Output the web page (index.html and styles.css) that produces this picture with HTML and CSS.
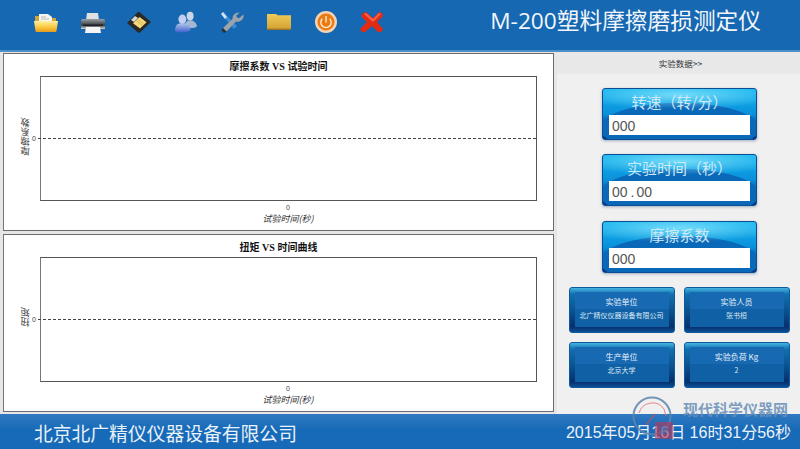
FILE: index.html
```html
<!DOCTYPE html>
<html lang="zh">
<head>
<meta charset="utf-8">
<title>M-200塑料摩擦磨损测定仪</title>
<link rel="stylesheet" href="styles.css">
</head>
<body>
<div class="app">
  <header class="top">
    <nav class="tools">
      <svg class="ico" viewBox="0 0 24 22">
        <defs><linearGradient id="gy" x1="0" y1="0" x2="0" y2="1"><stop offset="0" stop-color="#fff1a6"/><stop offset=".55" stop-color="#fbc93f"/><stop offset="1" stop-color="#e39a1c"/></linearGradient></defs>
        <path d="M1 5h7l1.500 2H22v6H1z" fill="#d5a33a"/><path d="M5 3h9l4 3v6H5z" fill="#f5f5f0"/><path d="M7 6h5M7 8h8" stroke="#a8a8a0" stroke-width=".7"/><path d="M0 10h24l-1.500 10q0 1-1 1h-19q-1 0-1-1z" fill="url(#gy)"/>
      </svg>
      <svg class="ico" viewBox="0 0 24 22">
        <defs><linearGradient id="gp" x1="0" y1="0" x2="0" y2="1"><stop offset="0" stop-color="#9aa0a5"/><stop offset=".6" stop-color="#3a3f44"/><stop offset="1" stop-color="#d4d6d8"/></linearGradient></defs>
        <path d="M6 2h11l1 7H5z" fill="#e0e1e2"/><path d="M1.500 8h21q1.500 0 1.500 2v8H0v-8q0-2 1.500-2z" fill="url(#gp)"/><path d="M2 13.500h20v1.500H2z" fill="#1f2326"/><path d="M5 16h14l1 6H4z" fill="#f4f4f4"/>
      </svg>
      <svg class="ico" viewBox="0 0 24 22">
        <path d="M11 1l1.500 0L24 11 13 21.500q-1 .5-2 0L0 12z" fill="#2a2925"/><path d="M12.500 6l7 5.200-6.500 6.300-7-5.300z" fill="#f6d97c"/><path d="M9 9.500l6 4.500M10.500 8.200l6 4.500" stroke="#c49c3a" stroke-width=".6"/><path d="M4 9l4-4 3 2-4 4z" fill="#d8d8d8"/>
      </svg>
      <svg class="ico" viewBox="0 0 24 24">
        <defs><linearGradient id="gu" x1="0" y1="0" x2="0" y2="1"><stop offset="0" stop-color="#b7c8ee"/><stop offset="1" stop-color="#3d5fcc"/></linearGradient></defs>
        <ellipse cx="16.500" cy="5.500" rx="3.800" ry="4.800" fill="#c9d6e6"/><path d="M11 16q0-6 5.500-6t7.500 6q0 2-5 2.500-8 0-8-2.500z" fill="#a5b6d3"/><ellipse cx="8" cy="9" rx="4.300" ry="5.200" fill="#c2cff3"/><path d="M0 21q0-8 8-8t9 7q0 3-9 3.500-8 0-8-2.500z" fill="url(#gu)"/>
      </svg>
      <svg class="ico" viewBox="0 0 24 22">
        <path d="M1 3l2.500-2L17 15l-3 3z" fill="#3f8ad0"/><path d="M3 1L7 6 5 8 1 3z" fill="#cfe4f6"/><path d="M23.500 3.500a6 6 0 0 1-7.500 7L7 20l-3.500.5-.5-3.500 9.500-9a6 6 0 0 1 7-6.500L16 5l2.500 2.500z" fill="#9ca3a9"/><path d="M3 17l3.500 3.500L4 22 1.500 19.500z" fill="#2b2e31"/>
      </svg>
      <svg class="ico" viewBox="0 0 24 22">
        <defs><linearGradient id="gf" x1="0" y1="0" x2="0" y2="1"><stop offset="0" stop-color="#efcb5a"/><stop offset=".85" stop-color="#d8a635"/><stop offset="1" stop-color="#8f6a1d"/></linearGradient></defs>
        <path d="M0 3h9l1.500 1.200H24V19H0z" fill="url(#gf)"/>
      </svg>
      <svg class="ico" viewBox="0 0 24 22">
        <circle cx="12" cy="11" r="11" fill="#f4d2b4"/><circle cx="12" cy="11" r="8.500" fill="#ec7a12"/><path d="M8.200 7.800a5.200 5.200 0 1 0 7.600 0" fill="none" stroke="#fff3e0" stroke-width="1.300"/><path d="M12 5v6.500" stroke="#fff3e0" stroke-width="1.300"/>
      </svg>
      <svg class="ico" viewBox="0 0 24 22">
        <path d="M3 2l3-1 7 6 6-6 3 1 1 3-6 6 6 7-2 3-3 0-6-6-7 6-3 0-2-3 7-7-6-6z" fill="#e42a10"/><path d="M4 3l2-1 7 6 6-6 2 1-8 8z" fill="#f4634a"/>
      </svg>
    </nav>
    <h1 class="app-title">M-200塑料摩擦磨损测定仪</h1>
  </header>

  <main class="body">
    <section class="charts">
      <article class="chart">
        <h2 class="chart-title">摩擦系数 VS 试验时间</h2>
        <div class="plot-row">
          <div class="y-name">摩擦系数</div>
          <div class="y-tick">0</div>
          <div class="plot"><div class="grid-line"></div></div>
        </div>
        <div class="x-tick">0</div>
        <div class="x-name">试验时间(秒)</div>
      </article>
      <article class="chart">
        <h2 class="chart-title">扭矩 VS 时间曲线</h2>
        <div class="plot-row">
          <div class="y-name">扭矩</div>
          <div class="y-tick">0</div>
          <div class="plot"><div class="grid-line"></div></div>
        </div>
        <div class="x-tick">0</div>
        <div class="x-name">试验时间(秒)</div>
      </article>
    </section>

    <aside class="side">
      <div class="side-head">实验数据&gt;&gt;</div>
      <div class="gauges">
        <div class="gauge"><div class="gauge-label">转速（转/分）</div><div class="gauge-value">000</div></div>
        <div class="gauge"><div class="gauge-label">实验时间（秒）</div><div class="gauge-value">00<span class="dot">.</span>00</div></div>
        <div class="gauge"><div class="gauge-label">摩擦系数</div><div class="gauge-value">000</div></div>
      </div>
      <div class="cards">
        <div class="card"><div class="card-label">实验单位</div><div class="card-value">北广精仪仪器设备有限公司</div></div>
        <div class="card"><div class="card-label">实验人员</div><div class="card-value">张书桓</div></div>
        <div class="card"><div class="card-label">生产单位</div><div class="card-value">北京大学</div></div>
        <div class="card"><div class="card-label">实验负荷 Kg</div><div class="card-value">2</div></div>
      </div>
    </aside>
  </main>

  <footer class="bottom">
    <div class="company">北京北广精仪仪器设备有限公司</div>
    <div class="clock">2015年05月16日 16时31分56秒</div>
  </footer>

  <div class="mark">
    <svg class="mark-ico" viewBox="0 0 44 46"><circle cx="22" cy="20" r="18.500" fill="none" stroke="#5f86ad" stroke-width="2"/><path d="M9 17a14 14 0 0 1 25-4l2 7" fill="none" stroke="#e2707f" stroke-width="1"/><path d="M16 29l9-11" stroke="#a8566f" stroke-width="1.500"/><rect x="25" y="26" width="18" height="17" fill="#b83a5c" fill-opacity=".75"/><rect x="31" y="30" width="6" height="8" fill="#2f74b8" fill-opacity=".6"/></svg>
    <div class="mark-text">现代科学仪器网</div>
  </div>
</div>
</body>
</html>
```

FILE: styles.css
```css
* { box-sizing: border-box; }
html, body { margin: 0; height: 100%; }
body { font-family: "Noto Sans CJK SC", "Liberation Sans", sans-serif; overflow: hidden; }

.app { position: relative; width: 800px; height: 449px; display: flex; flex-direction: column; background: #e6e6e6; }

.top { height: 52px; flex: none; display: flex; align-items: center; justify-content: space-between; padding: 0 39px 7px 34px; background: #1668b2; border-bottom: 2px solid #4f8fc8; }
.tools { display: flex; align-items: center; gap: 22.600px; }
.ico { width: 24px; height: 22px; display: block; }
.app-title { margin: 0; font-family: "Open Sans", "Noto Sans CJK SC", sans-serif; font-size: 22.700px; font-weight: 400; color: #f2f6fb; white-space: nowrap; line-height: 1; }

.body { flex: 1; display: flex; min-height: 0; }

.charts { width: 557px; flex: none; padding: 1px 0 0 3px; display: flex; flex-direction: column; gap: 3px; }
.chart { width: 551px; height: 178px; background: #fff; border: 1px solid #6b6b6b; border-left-color: #777; display: flex; flex-direction: column; }
.chart-title { margin: 0; height: 22px; flex: none; text-align: center; font-family: "Liberation Serif", "Noto Sans CJK SC", serif; font-size: 10px; font-weight: 700; line-height: 26px; color: #111; }
.plot-row { display: flex; height: 125px; flex: none; }
.y-name { width: 28px; flex: none; align-self: center; padding-right: 17px; writing-mode: vertical-rl; transform: rotate(180deg) skewY(14deg); font-size: 9.500px; line-height: 9px; color: #444; white-space: nowrap; text-align: center; margin-top: -8px; }
.y-tick { width: 8px; flex: none; align-self: center; font-family: "Liberation Sans", sans-serif; font-size: 7px; line-height: 8px; color: #444; }
.plot { width: 497px; flex: none; position: relative; border: 1px solid #555; border-left: 1.500px solid #777; }
.grid-line { position: absolute; left: -3px; right: 0; top: calc(50% - 1px); border-top: 1px dashed #444; }
.x-tick { margin-top: 2px; height: 8px; text-align: center; font-family: "Liberation Sans", sans-serif; font-size: 7px; line-height: 9px; color: #444; padding-left: 19px; flex: none; }
.x-name { height: 13px; text-align: center; font-size: 9px; font-style: italic; line-height: 15px; color: #333; padding-left: 19px; flex: none; }

.side { flex: 1; display: flex; flex-direction: column; background: #f0f0f0; }
.side-head { height: 22px; flex: none; background: #e8e8e8; text-align: center; font-size: 8.500px; line-height: 22px; color: #333; padding-left: 4px; }
.gauges { display: flex; flex-direction: column; align-items: center; gap: 14.400px; padding: 14px 0 14px 2px; }
.gauge { width: 155px; height: 52px; padding: 5px 6px 4px; border-radius: 3px; border: 1px solid #0d4d94; background: radial-gradient(ellipse 70% 28% at 50% 12%, rgba(150,235,255,.75), transparent), radial-gradient(ellipse 78% 75% at 50% 78%, #0a68b8 66%, transparent 68%), linear-gradient(#10b4ee 0, #0a90da 50%, #053f93 82%, #04307f 100%); box-shadow: 0 1px 3px rgba(60,90,130,.45); display: flex; flex-direction: column; }
.gauge-label { height: 21px; flex: none; text-align: center; font-size: 15px; line-height: 15px; color: #cdeaf8; white-space: nowrap; }
.gauge-value { height: 20px; flex: none; background: #fff; font-family: "Liberation Sans", sans-serif; font-size: 14px; line-height: 22px; color: #555; padding-left: 3px; }
.dot { margin: 0 2px 0 3px; }

.cards { display: grid; grid-template-columns: 106px 106px; gap: 9px; justify-content: center; margin-left: 1px; }
.card { height: 46px; padding: 4px 5px 5px; border-radius: 3px; background: linear-gradient(#45b4e2 0, #1170ae 14%, #0a4f8e 55%, #062f6c 88%, #0c4f96 100%); border: 1px solid #0f5a9c; display: flex; flex-direction: column; }
.card-label { height: 17px; flex: none; background: #1769b2; text-align: center; font-size: 8px; line-height: 19px; color: #e8f2fa; white-space: nowrap; }
.card-value { flex: 1; background: #0f60a4; text-align: center; font-size: 7px; line-height: 12px; color: #dbe9f5; white-space: nowrap; }

.bottom { height: 35px; flex: none; display: flex; align-items: center; justify-content: space-between; padding: 3px 9px 0 34px; background: linear-gradient(#3079c0, #176ab8 45%); }
.company { font-size: 18.800px; line-height: 1; color: #e9f1f9; white-space: nowrap; }
.clock { font-family: "Liberation Sans", "Noto Sans CJK SC", sans-serif; font-size: 16px; line-height: 1; color: #edf3fa; white-space: nowrap; }

.mark { position: absolute; left: 630px; top: 396px; display: flex; opacity: .85; pointer-events: none; }
.mark-ico { width: 44px; height: 46px; display: block; }
.mark-text { margin: 5px 0 0 9px; font-size: 15px; font-weight: 700; line-height: 15px; color: #6a8fb8; white-space: nowrap; }
```
